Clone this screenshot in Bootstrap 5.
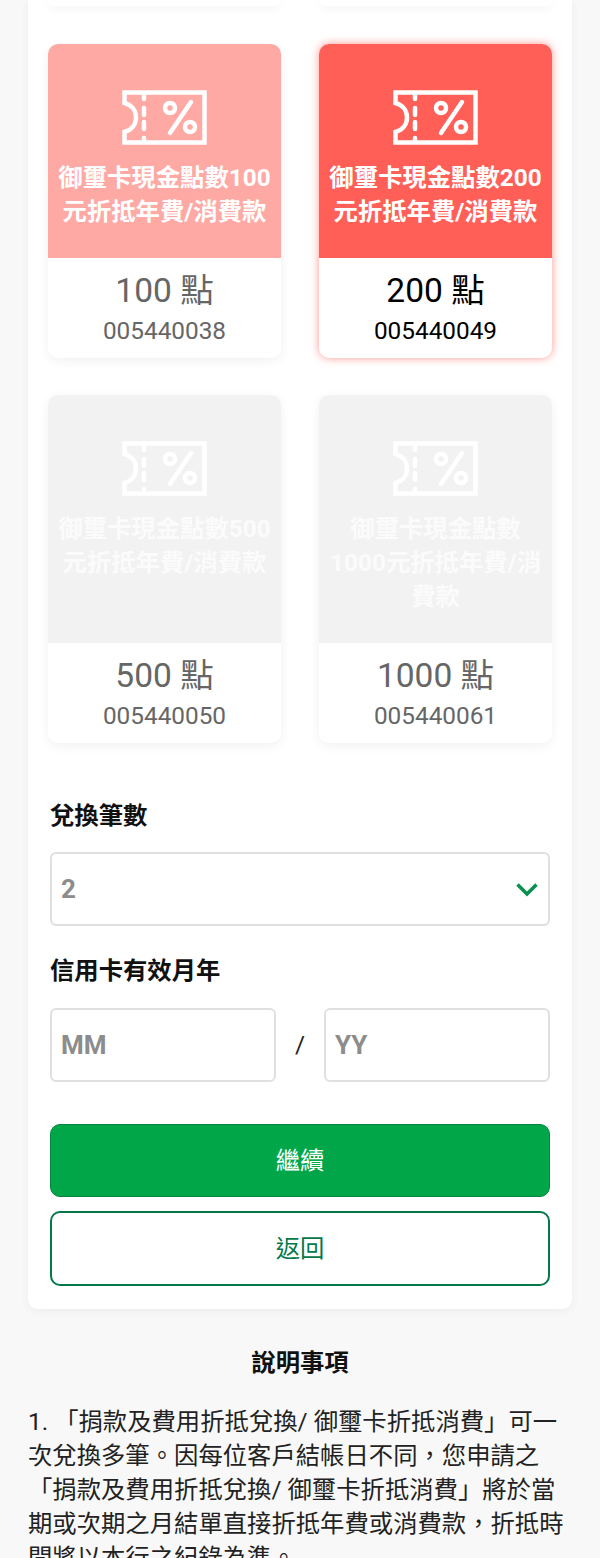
<!DOCTYPE html>
<html lang="zh-Hant">
<head>
<meta charset="utf-8">
<title>御璽卡折抵消費</title>
<link href="https://cdn.jsdelivr.net/npm/bootstrap@5.3.0/dist/css/bootstrap.min.css" rel="stylesheet">
<style>
html,body{height:1558px;overflow:hidden}
body{background:#f8f8f8;font-family:Roboto,"Noto Sans CJK TC",sans-serif;font-size:24.35px;line-height:34px;color:#111}
.sheet{width:544px;margin-left:28px;background:#fff;border-radius:0 0 10px 10px;box-shadow:0 2px 10px rgba(0,0,0,.05);padding:0 20px 23px;height:1309px}
.tilegrid{--bs-gutter-x:38px;--bs-gutter-y:0}
.tilecell{margin-bottom:37px}
.stubcell{margin-bottom:38px}
.stub{height:6px;background:#fff;border-radius:0 0 10px 10px;box-shadow:0 2px 10px rgba(0,0,0,.06)}
.tile{background:#fff;border-radius:10px;box-shadow:0 3px 12px rgba(0,0,0,.06);overflow:hidden;text-align:center;color:#666}
.tile-art{padding:46px 8px 29px;color:#fff;font-weight:700;background:#ffa9a5}
.tile-art svg{display:block;margin:0 auto 16px;width:85px;height:55px}
.tile-info{height:100px;padding-top:14px}
.tile-pts{font-size:33.5px;line-height:38px}
.tile-code{line-height:32px;margin-top:5px}
.tile.chosen{color:#000;box-shadow:0 0 9px rgba(255,80,72,.6)}
.tile.chosen .tile-art{background:#ff5f57}
.tile.off .tile-art{background:#f2f2f2}
.tile.off .tile-art span{opacity:.75}
.formwrap{padding:0 2px;margin-top:19px}
.fieldlabel{font-weight:700;line-height:34px;margin:0 0 19px;color:#111}
.fieldlabel.fieldgap{margin-top:28px;margin-bottom:20px}
.form-control.fieldbox,.form-select.fieldbox{height:74px;border:2px solid #e0e0e0;border-radius:6px;font-family:inherit;font-size:26px;font-weight:700;color:#8c8c8c;padding:0 9px;box-shadow:none}
.form-control.fieldbox::placeholder{color:#8c8c8c;opacity:1}
.form-select.fieldbox{background-size:24px 16px;background-position:right 9px center;background-image:url("data:image/svg+xml,%3Csvg xmlns='http://www.w3.org/2000/svg' viewBox='0 0 24 16'%3E%3Cpath d='M2.5 3.5 12 13l9.500-9.500' fill='none' stroke='%230a9150' stroke-width='3.600'/%3E%3C/svg%3E")}
.dateslash{width:48px;text-align:center;flex:none;color:#222}
.datefield{flex:1 1 0;min-width:0}
.actionbtn{display:block;width:100%;border-radius:10px;font-size:24.35px;line-height:34px}
.btn.go{background:#00a648;border:1px solid #05853f;color:#fff;margin-top:42px;height:73px}
.btn.back{background:#fff;border:2px solid #05784a;color:#05784a;margin-top:14px;height:75px}
.notes{padding:0 28px;margin-top:37px}
.notes h2{font-size:24.35px;line-height:34px;font-weight:700;text-align:center;margin:0 0 25px;color:#111}
.notes p{margin:0;line-height:33.9px;color:#222}
</style>
</head>
<body>
<main class="sheet">
  <div class="row tilegrid">
    <div class="col-6 stubcell"><div class="stub"></div></div>
    <div class="col-6 stubcell"><div class="stub"></div></div>

    <div class="col-6 tilecell">
      <div class="tile h-100 d-flex flex-column">
        <div class="tile-art flex-grow-1">
          <svg viewBox="0 0 85 55" fill="none" stroke="currentColor" stroke-width="4.500" aria-hidden="true"><path d="M2.500 2.500H82.500V52.500H2.500V42C10 40 14 34 14 27.500C14 21 10 15 2.500 13Z"/><path d="M22 5v4M22 18v7M22 32v7M22 48v3M69 12 48 43" stroke-linecap="round"/><circle cx="48" cy="18" r="5"/><circle cx="68" cy="37" r="5"/></svg>
          <span>御璽卡現金點數100元折抵年費/消費款</span>
        </div>
        <div class="tile-info"><div class="tile-pts">100 點</div><div class="tile-code">005440038</div></div>
      </div>
    </div>
    <div class="col-6 tilecell">
      <div class="tile chosen h-100 d-flex flex-column">
        <div class="tile-art flex-grow-1">
          <svg viewBox="0 0 85 55" fill="none" stroke="currentColor" stroke-width="4.500" aria-hidden="true"><path d="M2.500 2.500H82.500V52.500H2.500V42C10 40 14 34 14 27.500C14 21 10 15 2.500 13Z"/><path d="M22 5v4M22 18v7M22 32v7M22 48v3M69 12 48 43" stroke-linecap="round"/><circle cx="48" cy="18" r="5"/><circle cx="68" cy="37" r="5"/></svg>
          <span>御璽卡現金點數200元折抵年費/消費款</span>
        </div>
        <div class="tile-info"><div class="tile-pts">200 點</div><div class="tile-code">005440049</div></div>
      </div>
    </div>
    <div class="col-6 tilecell">
      <div class="tile off h-100 d-flex flex-column">
        <div class="tile-art flex-grow-1">
          <svg viewBox="0 0 85 55" fill="none" stroke="currentColor" stroke-width="4.500" aria-hidden="true"><path d="M2.500 2.500H82.500V52.500H2.500V42C10 40 14 34 14 27.500C14 21 10 15 2.500 13Z"/><path d="M22 5v4M22 18v7M22 32v7M22 48v3M69 12 48 43" stroke-linecap="round"/><circle cx="48" cy="18" r="5"/><circle cx="68" cy="37" r="5"/></svg>
          <span>御璽卡現金點數500元折抵年費/消費款</span>
        </div>
        <div class="tile-info"><div class="tile-pts">500 點</div><div class="tile-code">005440050</div></div>
      </div>
    </div>
    <div class="col-6 tilecell">
      <div class="tile off h-100 d-flex flex-column">
        <div class="tile-art flex-grow-1">
          <svg viewBox="0 0 85 55" fill="none" stroke="currentColor" stroke-width="4.500" aria-hidden="true"><path d="M2.500 2.500H82.500V52.500H2.500V42C10 40 14 34 14 27.500C14 21 10 15 2.500 13Z"/><path d="M22 5v4M22 18v7M22 32v7M22 48v3M69 12 48 43" stroke-linecap="round"/><circle cx="48" cy="18" r="5"/><circle cx="68" cy="37" r="5"/></svg>
          <span>御璽卡現金點數1000元折抵年費/消費款</span>
        </div>
        <div class="tile-info"><div class="tile-pts">1000 點</div><div class="tile-code">005440061</div></div>
      </div>
    </div>
  </div>

  <form class="formwrap">
    <label class="fieldlabel d-block" for="qty">兌換筆數</label>
    <select class="form-select fieldbox" id="qty"><option>2</option></select>
    <label class="fieldlabel d-block fieldgap" for="mm">信用卡有效月年</label>
    <div class="d-flex align-items-center">
      <div class="datefield"><input class="form-control fieldbox" id="mm" placeholder="MM"></div>
      <div class="dateslash">/</div>
      <div class="datefield"><input class="form-control fieldbox" placeholder="YY"></div>
    </div>
    <button type="button" class="btn actionbtn go">繼續</button>
    <button type="button" class="btn actionbtn back">返回</button>
  </form>
</main>
<section class="notes">
  <h2>說明事項</h2>
  <p>1. 「捐款及費用折抵兌換/ 御璽卡折抵消費」可一次兌換多筆。因每位客戶結帳日不同，您申請之「捐款及費用折抵兌換/ 御璽卡折抵消費」將於當期或次期之月結單直接折抵年費或消費款，折抵時間將以本行之紀錄為準。</p>
</section>
<script src="https://cdn.jsdelivr.net/npm/bootstrap@5.3.0/dist/js/bootstrap.bundle.min.js"></script>
</body>
</html>
